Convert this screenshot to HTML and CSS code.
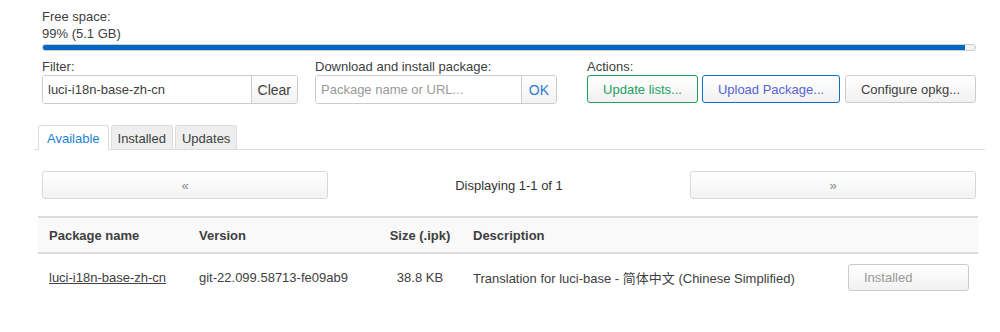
FILE: index.html
```html
<!DOCTYPE html>
<html lang="en">
<head>
  <meta charset="UTF-8" />
  <title>Software - LuCI</title>
  <link rel="stylesheet" href="styles.css">
</head>
<body>
  <div class="page">
    <div class="free-space">
      <div>Free space:</div>
      <div>99% (5.1 GB)</div>
    </div>
    <div class="progress"><div class="progress-fill" style="width: 98.9%"></div></div>

    <div class="controls">
      <div class="control filter">
        <label>Filter:</label>
        <div class="input-group">
          <input type="text" value="luci-i18n-base-zh-cn" />
          <button class="addon">Clear</button>
        </div>
      </div>
      <div class="control download">
        <label>Download and install package:</label>
        <div class="input-group">
          <input type="text" placeholder="Package name or URL..." />
          <button class="addon ok">OK</button>
        </div>
      </div>
      <div class="control actions">
        <label>Actions:</label>
        <div class="btn-row">
          <button class="btn btn-green">Update lists...</button>
          <button class="btn btn-blue">Upload Package...</button>
          <button class="btn">Configure opkg...</button>
        </div>
      </div>
    </div>

    <ul class="tabs">
      <li class="tab active">Available</li>
      <li class="tab">Installed</li>
      <li class="tab">Updates</li>
    </ul>

    <div class="pager">
      <button class="pager-btn">&laquo;</button>
      <div class="pager-info">Displaying 1-1 of 1</div>
      <button class="pager-btn">&raquo;</button>
    </div>

    <table class="packages">
      <colgroup>
        <col class="c-name" />
        <col class="c-version" />
        <col class="c-size" />
        <col class="c-desc" />
        <col class="c-action" />
      </colgroup>
      <thead>
        <tr>
          <th>Package name</th>
          <th>Version</th>
          <th class="center">Size (.ipk)</th>
          <th>Description</th>
          <th></th>
        </tr>
      </thead>
      <tbody>
        <tr>
          <td><a href="#">luci-i18n-base-zh-cn</a></td>
          <td>git-22.099.58713-fe09ab9</td>
          <td class="center">38.8 KB</td>
          <td>Translation for luci-base - 简体中文 (Chinese Simplified)</td>
          <td><button class="btn installed" disabled>Installed</button></td>
        </tr>
      </tbody>
    </table>
  </div>
</body>
</html>
```

FILE: styles.css
```css
body {
  margin: 0;
  font-family: 'Liberation Sans', Arial, 'Noto Sans CJK SC', sans-serif;
  font-size: 13px;
  color: #404040;
  background: #fff;
}
.page {
  padding: 8px 24px 0 42px;
}
.free-space {
  line-height: 17px;
}
.progress {
  margin-top: 2px;
  height: 5px;
  border: 1px solid #ccc;
  border-radius: 3px;
  background: #f3f3f3;
  overflow: hidden;
}
.progress-fill {
  height: 100%;
  background: #0069c6;
}
.controls {
  display: flex;
  margin-top: 7px;
}
.control label {
  display: block;
  line-height: 17px;
  margin-bottom: 0;
}
.filter {
  width: 256px;
  margin-right: 17px;
}
.download {
  width: 242px;
  margin-right: 30px;
}
.input-group {
  display: flex;
  height: 29px;
  border: 1px solid #ccc;
  border-radius: 3px;
  box-sizing: border-box;
  overflow: hidden;
}
.input-group input {
  flex: 1;
  min-width: 0;
  border: none;
  padding: 0 5px;
  font: inherit;
  font-size: 13px;
  color: #404040;
  outline: none;
}
.input-group input::placeholder {
  color: #999;
}
.addon {
  border: none;
  border-left: 1px solid #ccc;
  background: linear-gradient(#fff, #f2f2f2);
  font: inherit;
  font-size: 14px;
  color: #404040;
  padding: 0 6px;
}
.addon.ok {
  color: #2d7bd0;
  padding: 0 7px;
}
.btn-row {
  display: flex;
  gap: 4px;
}
.btn {
  height: 28px;
  box-sizing: border-box;
  border: 1px solid #ccc;
  border-radius: 3px;
  background: linear-gradient(#fff, #f1f1f1);
  font: inherit;
  color: #404040;
  padding: 0 14px;
}
.btn-green {
  width: 111px;
  border-color: #1aa25b;
  color: #22a060;
}
.btn-blue {
  width: 138px;
  border-color: #0a6ed1;
  color: #5763cf;
  margin-right: 1px;
}
.btn-row .btn:last-child {
  width: 131px;
}
.tabs {
  list-style: none;
  margin: 21px -9px 0 -8px;
  padding: 0 0 0 4px;
  display: flex;
  gap: 2px;
  border-bottom: 1px solid #ddd;
  height: 24px;
}
.tab {
  height: 24px;
  box-sizing: border-box;
  padding: 4px 6px 0;
  border: 1px solid #ddd;
  border-bottom: none;
  border-radius: 3px 3px 0 0;
  background: #eee;
  color: #404040;
  line-height: 17px;
}
.tab.active {
  background: #fff;
  color: #1e7fd2;
  height: 25px;
  padding: 4px 8px 0;
}
.pager {
  display: flex;
  align-items: center;
  margin-top: 21px;
}
.pager-btn {
  width: 286px;
  height: 28px;
  border: 1px solid #d8d8d8;
  border-radius: 3px;
  background: linear-gradient(#fff, #f3f3f3);
  font: inherit;
  color: #888;
}
.pager-info {
  flex: 1;
  text-align: center;
  color: #333;
}
.packages {
  margin: 17px 0 0 -4px;
  width: 940px;
  border-collapse: collapse;
  table-layout: fixed;
}
.c-name { width: 150px; }
.c-version { width: 190px; }
.c-size { width: 84px; }
.c-desc { width: 374px; }
.packages th {
  background: #f9f9f9;
  border-top: 2px solid #ddd;
  border-bottom: 2px solid #ddd;
  text-align: left;
  font-weight: bold;
  height: 34px;
  padding: 0 11px;
  color: #404040;
}
.packages td {
  height: 46px;
  padding: 0 11px;
  white-space: nowrap;
}
.packages .center {
  text-align: center;
}
.packages a {
  color: #404040;
}
.installed {
  width: 121px;
  height: 27px;
  color: #999;
  text-align: left;
  padding-left: 15px;
  margin-left: 1px;
}
```
